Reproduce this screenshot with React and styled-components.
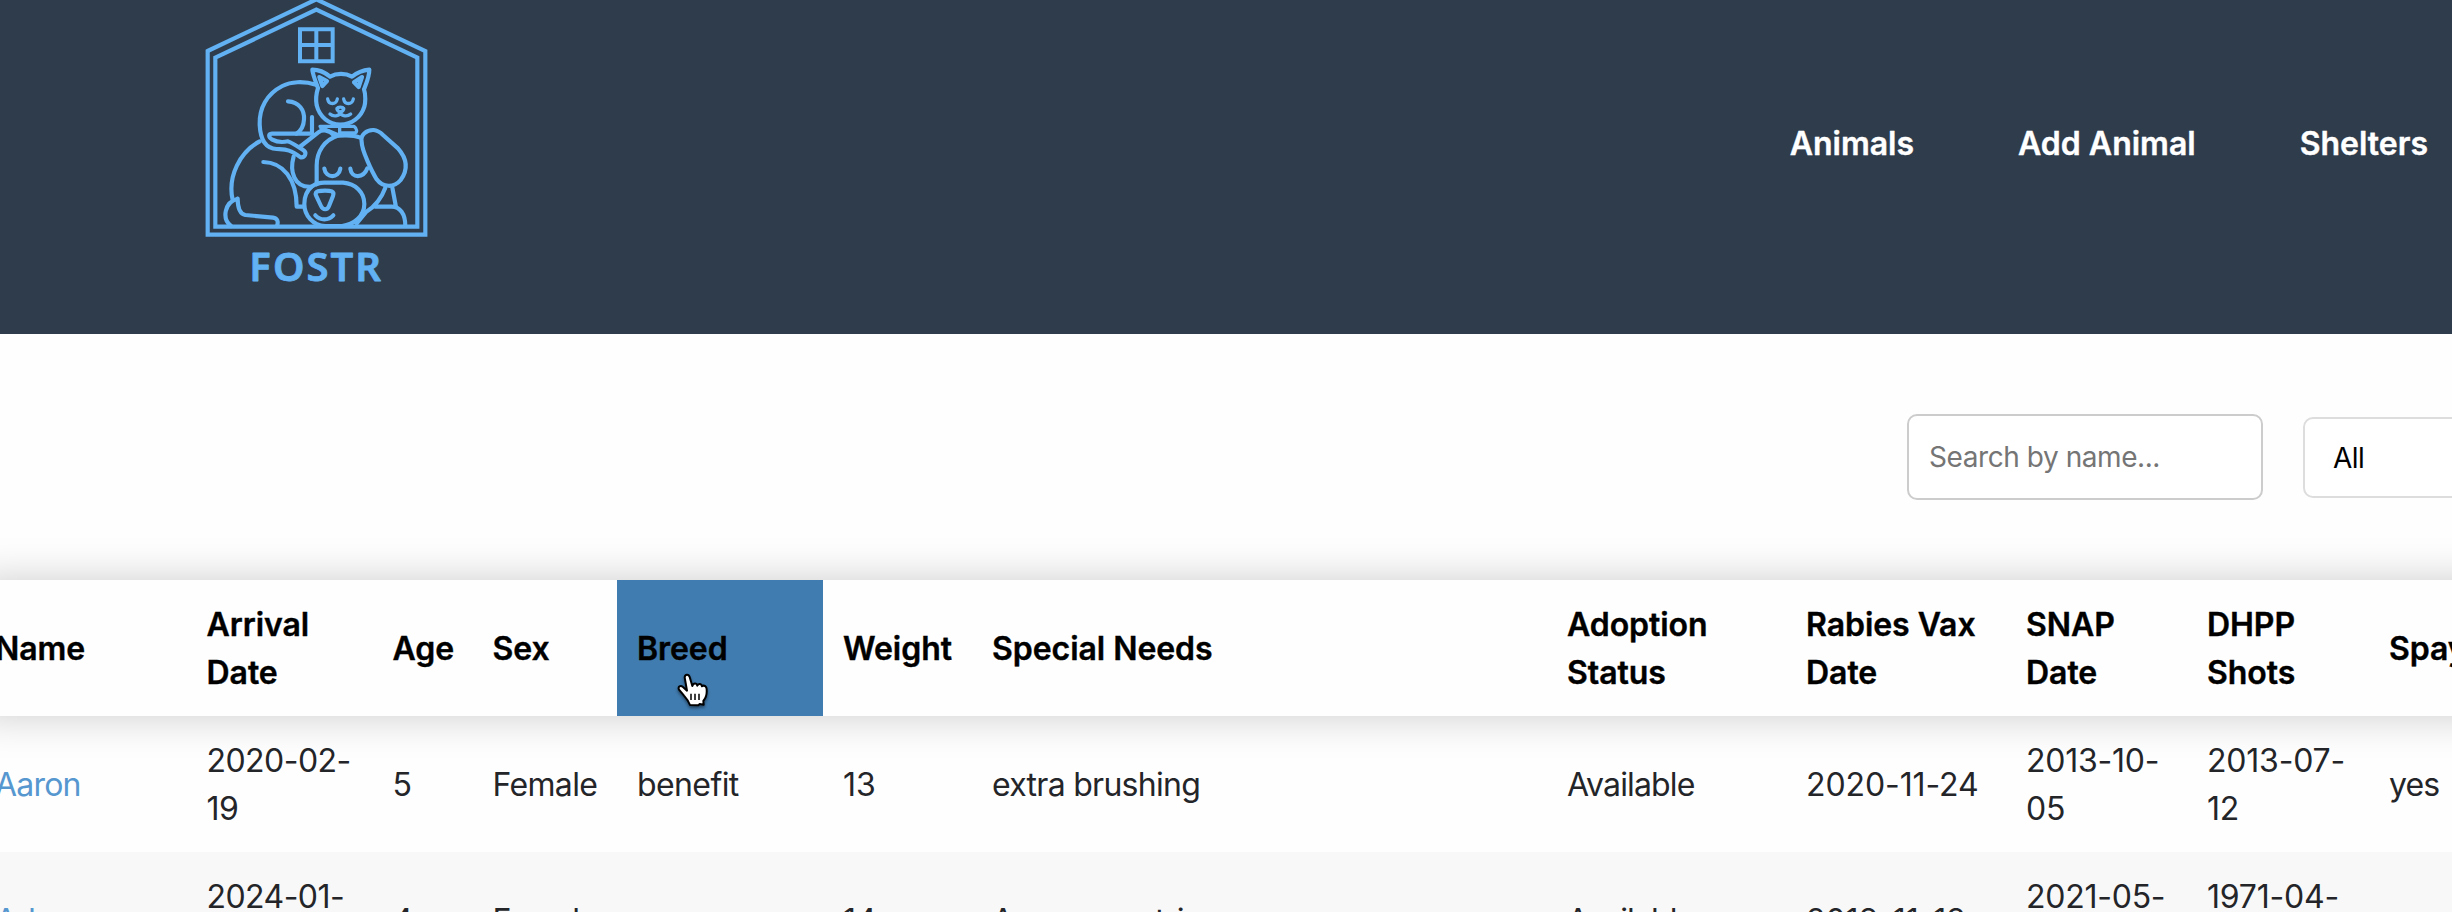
import React from "react";
import styled, { createGlobalStyle } from "styled-components";

const GlobalStyle = createGlobalStyle`
  *, *::before, *::after { box-sizing: border-box; }
  body {
    margin: 0;
    background: #fefefe;
    color: #242529;
    font-family: Inter, "Noto Sans", sans-serif;
    font-size: 32px;
    line-height: 48px;
    overflow: hidden;
  }
`;

const Page = styled.div`
  width: 100%;
  height: 912px;
  overflow: hidden;
  display: flex;
  flex-direction: column;
`;

const Header = styled.header`
  flex: none;
  height: 334px;
  padding: 0 24px 0 190px;
  background: #2f3c4c;
  display: flex;
  justify-content: space-between;
  align-items: flex-start;
`;

const LogoArt = styled.svg`
  display: block;
  width: 250px;
  height: 300px;
  fill: none;
  stroke: #61b1f3;
  stroke-width: 12.5;
  stroke-linecap: round;
  stroke-linejoin: round;
`;

const LogoText = styled.text`
  font-family: "Noto Sans", sans-serif;
  font-weight: 600;
  font-size: 120px;
  fill: #61b1f3;
  stroke: #61b1f3;
  stroke-width: 2.5;
`;

const Nav = styled.nav`
  display: flex;
  gap: 104px;
  padding-top: 120px;
`;

const NavLink = styled.a`
  color: #fff;
  font-weight: 600;
  -webkit-text-stroke: 0.4px currentColor;
  text-decoration: none;
  white-space: nowrap;
`;

const Toolbar = styled.section`
  flex: none;
  height: 246px;
  padding: 80px 0 0 1907px;
  display: flex;
  align-items: flex-start;
  gap: 40px;
`;

const SearchInput = styled.input`
  flex: none;
  width: 356px;
  height: 86px;
  padding: 0 20px;
  border: 2px solid #ccc;
  border-radius: 10px;
  background: #fff;
  font: inherit;
  font-size: 28px;
  letter-spacing: -0.43px;
  outline: none;
  &::placeholder { color: #757575; opacity: 1; }
`;

const FilterSelect = styled.button`
  flex: none;
  width: 260px;
  height: 81px;
  margin-top: 3px;
  padding: 0 28px;
  border: 2px solid #ddd;
  border-radius: 10px;
  background: #fff;
  color: #000;
  font: inherit;
  font-size: 28px;
  letter-spacing: -0.5px;
  text-align: left;
`;

const Table = styled.div`
  flex: none;
  width: 2593px;
  margin-left: -25px;
`;

const Row = styled.div`
  display: grid;
  grid-template-columns: 211.5px 186px 100px 144.5px 206px 149px 575px 239px 220px 181px 182px 199px;
  height: 136px;
  background: ${(p) => (p.$striped ? "#f8f8f8" : "#fefefe")};
`;

const HeadRow = styled(Row)`
  position: relative;
  z-index: 1;
  color: #000;
  font-weight: 600;
  -webkit-text-stroke: 0.4px currentColor;
  box-shadow: 0 0 40px rgba(0, 0, 0, 0.2);
`;

const Cell = styled.div`
  display: flex;
  align-items: center;
  padding: 2px 18px 0 20px;
  letter-spacing: ${(p) => p.$tracking || 0}px;
`;

const HeadCell = styled(Cell)`
  cursor: pointer;
  background: ${(p) => (p.$active ? "#417cb0" : "transparent")};
  position: relative;
`;

const NameLink = styled.a`
  color: #5697d0;
  text-decoration: none;
`;

const Pointer = styled.svg`
  position: absolute;
  left: 59px;
  top: 92px;
  width: 36px;
  height: 40px;
  filter: drop-shadow(0 2px 1.5px rgba(0, 0, 0, 0.45));
`;

const columns = [
  "Name", "Arrival Date", "Age", "Sex", "Breed", "Weight", "Special Needs",
  "Adoption Status", "Rabies Vax Date", "SNAP Date", "DHPP Shots", "Spayed",
];

const tracking = [-0.8, -0.55, 0, -0.65, -0.6, 0, -0.72, -0.85, -0.1, -0.25, -0.2, -0.9];

const animals = [
  ["Aaron", "2020-02-19", "5", "Female", "benefit", "13", "extra brushing", "Available", "2020-11-24", "2013-10-05", "2013-07-12", "yes"],
  ["Adam", "2024-01-12", "4", "Female", "news", "14", "Answer on trip", "Available", "2018-11-18", "2021-05-16", "1971-04-22", "no"],
];

function Logo() {
  return (
    <LogoArt viewBox="0 0 750 900" role="img" aria-label="FOSTR">
      <g strokeLinejoin="miter" strokeLinecap="butt">
        <path d="M53 153 L379 -2 L706 153 V704 H53 Z" />
        <path d="M76 173 L379 29 L682 173 V680 H76 Z" />
        <path d="M330 88 H428 V184 H330 Z M379 88 V184 M330 135 H428" strokeWidth="12" />
      </g>
      <path d="M384 264 C373 235 367 218 367 209 C387 209 407 219 420 230 C440 219 466 219 486 230 C501 218 518 211 538 209 C538 230 530 247 522 268 C528 285 526 310 523 320 C513 353 485 373 451 374 C417 373 389 352 380 316 C377 300 378 283 384 264 Z" />
      <path d="M388 231 L411 243 L397 258 Z M516 231 L492 247 L506 261 Z" />
      <path d="M413 297 C416 315 438 315 442 297 M461 297 C464 315 486 315 490 297" strokeWidth="10" />
      <path d="M441 325 C444 320 458 320 461 325 C463 331 455 334 451 338 C447 334 439 331 441 325 Z M451 338 C447 349 430 351 420 342 M451 338 C455 349 472 351 482 342" strokeWidth="10" />
      <path d="M390 379 H492 C502 386 502 397 494 399 H449 V384 M392 383 L447 405" strokeWidth="10" />
      <path d="M378 254 C340 242 302 245 277 258 C230 282 207 325 209 374 C211 416 226 446 260 447 C288 449 298 447 332 472 C346 473 350 459 342 452 C324 440 310 430 294 424 C275 428 260 426 247 419 C234 411 235 402 246 401 H366 V351" />
      <path d="M294 304 C328 306 344 331 342 358 C341 380 334 392 319 401" />
      <path d="M209 424 C150 456 112 529 128 600 M220 486 C278 487 320 536 320 620 H340" />
      <path d="M143 596 C103 606 95 656 123 678 M143 596 C143 625 149 641 166 645 L249 653 C262 655 266 664 261 678" />
      <path d="M329 441 L385 397 C398 387 419 390 431 406 H446 C403 420 380 454 380 497 V553 M311 469 C299 512 310 564 365 560" />
      <path d="M446 407 C470 405 490 404 511 413" />
      <path d="M403 506 C408 536 446 536 451 506 M481 506 C485 536 520 536 532 505" />
      <path d="M515 425 C510 405 530 389 551 390 C563 391 571 397 579 405 L624 445 C654 479 653 511 632 540 C613 563 579 564 560 538 C547 517 515 451 515 425 Z" />
      <path d="M365 560 C378 550 389 548 403 548 H459 C496 551 523 576 523 612 C523 649 491 674 456 678 H405 C369 676 343 647 343 612 C343 588 352 571 365 560 Z" />
      <path d="M378 586 C373 572 390 572 405 572 C421 572 435 573 429 588 L417 618 C412 631 399 631 393 618 Z M376 646 C391 662 415 662 430 646" />
      <path d="M586 563 C576 590 560 616 529 635 L500 670 M555 620 H605 C630 620 646 642 646 678 M607 563 L618 621" />
      <LogoText x="178" y="844" textLength="395" lengthAdjust="spacing">FOSTR</LogoText>
    </LogoArt>
  );
}

function HandPointer() {
  return (
    <Pointer viewBox="0 0 108 120" aria-hidden="true">
      <path
        d="M26 16 C27 6 38 5 41 15 L49 42 C52 32 62 32 64 41 C68 33 77 35 78 43 C84 38 93 43 92 54 C93 67 88 80 82 87 L83 98 L71 96 L67 100 L42 99 C38 88 31 79 24 71 L9 53 C5 44 13 39 21 45 L33 56 Z"
        fill="#fff"
        stroke="#000"
        strokeWidth="6"
        strokeLinejoin="round"
      />
      <path d="M45 65 V84 M57 65 V84 M69 65 V84" stroke="#000" strokeWidth="4.5" />
    </Pointer>
  );
}

export default function App() {
  return (
    <Page>
      <GlobalStyle />
      <Header>
        <Logo />
        <Nav>
          <NavLink>Animals</NavLink>
          <NavLink>Add Animal</NavLink>
          <NavLink>Shelters</NavLink>
        </Nav>
      </Header>
      <Toolbar>
        <SearchInput placeholder="Search by name..." />
        <FilterSelect>All</FilterSelect>
      </Toolbar>
      <Table>
        <HeadRow>
          {columns.map((label) => (
            <HeadCell key={label} $active={label === "Breed"} $tracking={-0.05}>
              {label}
              {label === "Breed" && <HandPointer />}
            </HeadCell>
          ))}
        </HeadRow>
        {animals.map((animal, i) => (
          <Row key={animal[0]} $striped={i % 2 === 1}>
            {animal.map((value, c) => (
              <Cell key={c} $tracking={tracking[c]}>
                {c === 0 ? <NameLink>{value}</NameLink> : value}
              </Cell>
            ))}
          </Row>
        ))}
      </Table>
    </Page>
  );
}
